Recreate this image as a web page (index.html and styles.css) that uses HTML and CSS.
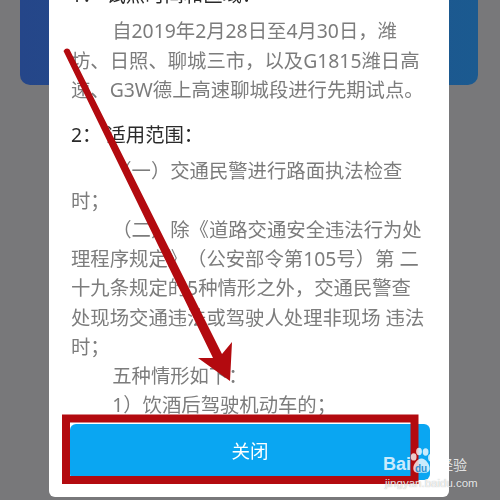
FILE: index.html
```html
<!DOCTYPE html>
<html lang="zh-CN">
<head>
<meta charset="utf-8">
<title>关闭</title>
<link rel="stylesheet" href="styles.css">
</head>
<body>
<main class="stage">
  <div class="under-card"></div>
  <section class="dialog">
    <div class="content">
      <h2 class="heading first">1： 试点时间和区域：</h2>
      <p class="indent">自2019年2月28日至4月30日，潍<br>坊、日照、聊城三市，以及G1815潍日高<br>速、G3W德上高速聊城段进行先期试点。</p>
      <h2 class="heading second">2： 适用范围：</h2>
      <p class="indent">（一）交通民警进行路面执法检查<br>时；</p>
      <p class="indent">（二）除《道路交通安全违法行为处<br>理程序规定》（公安部令第105号）第 二<br>十九条规定的5种情形之外，交通民警查<br>处现场交通违法或驾驶人处理非现场 违法<br>时；</p>
      <p class="indent">五种情形如下：</p>
      <p class="indent">1）饮酒后驾驶机动车的；</p>
    </div>
    <div class="footer"><button class="close">关闭</button></div>
  </section>
  <svg class="annotation" viewBox="0 0 500 500" aria-hidden="true">
    <rect x="66" y="418.500" width="348.500" height="61.500" fill="none" stroke="#b30a0f" stroke-width="8"/>
    <path d="M63.500 51 Q66 47 69.500 49.500 L222 354 L232 342 L230 381 L198 358 L213 358 Z" fill="#b30a0f"/>
  </svg>
  <div class="watermark">
    <div class="brand">
      <span class="bai">Bai</span>
      <span class="paw-wrap">
        <svg class="paw" viewBox="0 0 28 32" aria-hidden="true">
          <ellipse cx="4.500" cy="11" rx="3.500" ry="4.500"/>
          <ellipse cx="11" cy="4.500" rx="3.500" ry="4.500"/>
          <ellipse cx="19" cy="5" rx="3.500" ry="4.500"/>
          <ellipse cx="25" cy="12" rx="3" ry="4.500"/>
          <path d="M14 13C9 13 4 20 4 25c0 5 5 6 10 5 5 1 10 0 10-5 0-5-5-12-10-12z"/>
        </svg>
        <span class="du">du</span>
      </span>
      <span class="jy">经验</span>
    </div>
    <div class="domain">jingyan.baidu.com</div>
  </div>
</main>
</body>
</html>
```
FILE: styles.css
```css
* { box-sizing: border-box; }
html, body { margin: 0; padding: 0; }
body { width: 500px; height: 500px; overflow: hidden; background: #78787a; }
.stage {
  position: relative;
  width: 500px;
  height: 500px;
  overflow: hidden;
  background: #78787a;
  padding: 0 22px 0 20px;
  font-family: "Noto Sans", "Noto Sans CJK SC", sans-serif;
}
.under-card {
  height: 85px;
  border-radius: 0 0 10px 10px;
  background: linear-gradient(90deg, #254689, #1b5a90);
}
.dialog {
  position: absolute;
  left: 49px;
  top: -20px;
  width: 400px;
  height: 517px;
  background: #fff;
  border-radius: 0 0 6px 6px;
  display: flex;
  flex-direction: column;
  padding: 0 19px 17px 22px;
  filter: blur(0.35px);
}
.content {
  flex: 1;
  overflow: hidden;
  font-size: 19.35px;
  line-height: 29.25px;
  color: #7c7c7c;
  text-spacing-trim: space-all;
}
.content p { margin: 0; }
.indent { text-indent: 2.13em; white-space: nowrap; }
.heading { margin: 0; font-size: 19.35px; line-height: 29.25px; font-weight: 400; color: #2a2a2a; white-space: nowrap; }
.first { margin-bottom: 7px; }
.second { margin: 16px 0 7px; }
.footer { height: 56px; flex: none; }
.close {
  display: block;
  width: 360px;
  height: 56px;
  margin: 0 0 0 -1px;
  padding: 0 0 5px;
  border: 0;
  border-radius: 6px;
  background: #0aa6f2;
  color: #fff;
  font: 400 18.5px "Noto Sans CJK SC", sans-serif;
}
.annotation { position: absolute; left: 0; top: 0; width: 500px; height: 500px; }
.watermark { position: absolute; left: 383px; top: 446px; width: 112px; color: rgba(255,255,255,.8); }
.brand { display: flex; align-items: flex-end; height: 30px; }
.bai { font: 700 18px/20px "Liberation Sans", sans-serif; margin-bottom: 2px; }
.paw-wrap { position: relative; width: 23px; height: 30px; margin-left: -1px; flex: none; }
.paw { display: block; width: 23px; height: 30px; fill: rgba(255,255,255,.78); }
.du { position: absolute; left: 5px; bottom: 1px; font: 700 10px/12px "Liberation Sans", sans-serif; color: #2b8fd0; }
.jy { font-size: 14px; line-height: 20px; margin-left: 6px; margin-bottom: 1px; white-space: nowrap; }
.domain {
  font: 400 11.500px/12px "Liberation Sans", sans-serif;
  margin: 1px 0 0 2px;
  color: rgba(255,255,255,.85);
  text-shadow: 0 0 1px rgba(90,90,90,.55);
  white-space: nowrap;
}
```
